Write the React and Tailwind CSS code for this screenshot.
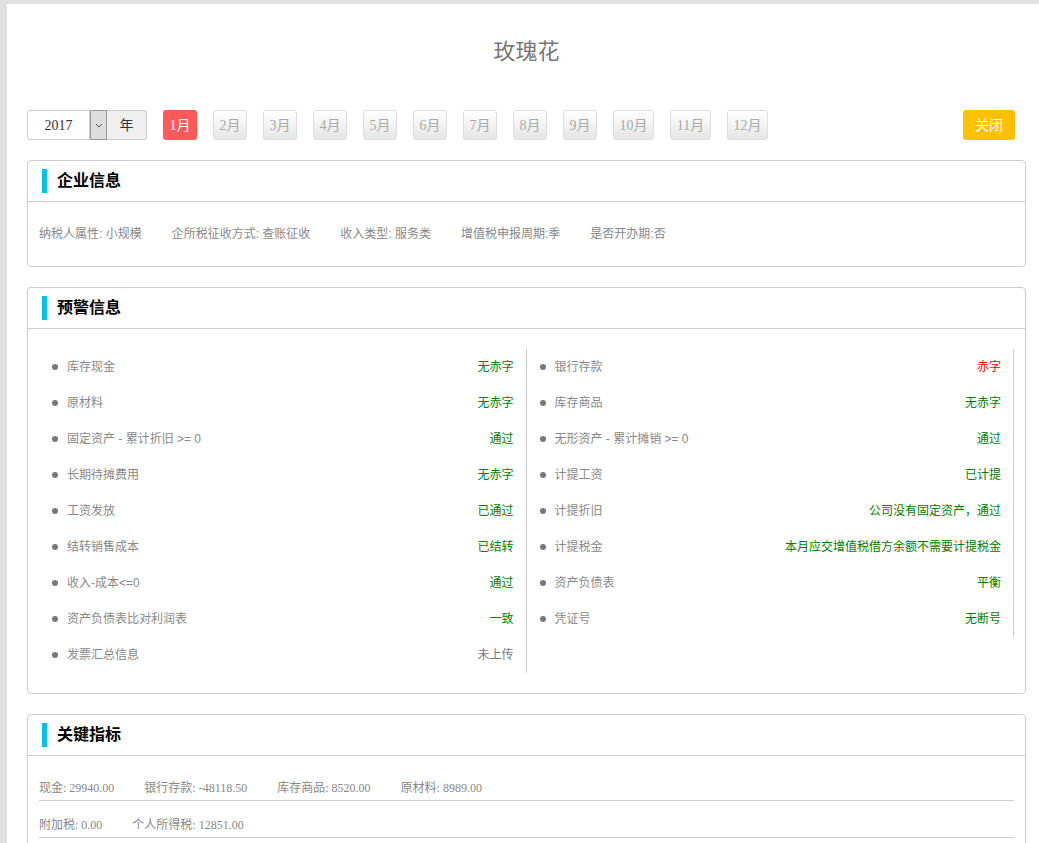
import React from 'react';

const sans = "font-['Liberation_Sans','Noto_Sans_CJK_SC',sans-serif]";
const serif = "font-['Liberation_Serif','Noto_Sans_CJK_SC',serif]";

const months = ['1月', '2月', '3月', '4月', '5月', '6月', '7月', '8月', '9月', '10月', '11月', '12月'];

const leftChecks = [
  { label: '库存现金', value: '无赤字', tone: 'green' },
  { label: '原材料', value: '无赤字', tone: 'green' },
  { label: '固定资产 - 累计折旧 >= 0', value: '通过', tone: 'green' },
  { label: '长期待摊费用', value: '无赤字', tone: 'green' },
  { label: '工资发放', value: '已通过', tone: 'green' },
  { label: '结转销售成本', value: '已结转', tone: 'green' },
  { label: '收入-成本<=0', value: '通过', tone: 'green' },
  { label: '资产负债表比对利润表', value: '一致', tone: 'green' },
  { label: '发票汇总信息', value: '未上传', tone: 'gray' },
];

const rightChecks = [
  { label: '银行存款', value: '赤字', tone: 'red' },
  { label: '库存商品', value: '无赤字', tone: 'green' },
  { label: '无形资产 - 累计摊销 >= 0', value: '通过', tone: 'green' },
  { label: '计提工资', value: '已计提', tone: 'green' },
  { label: '计提折旧', value: '公司没有固定资产，通过', tone: 'green' },
  { label: '计提税金', value: '本月应交增值税借方余额不需要计提税金', tone: 'green' },
  { label: '资产负债表', value: '平衡', tone: 'green' },
  { label: '凭证号', value: '无断号', tone: 'green' },
];

const toneClass = {
  green: 'text-[#008000]',
  red: 'text-[#ff0000]',
  gray: 'text-[#777]',
};

const PanelHeader = ({ title }) => (
  <div className="h-[41px] border-b border-[#ccc] flex items-center pl-[14px]">
    <span className="w-[5px] h-[24px] bg-[#00bfef]" />
    <h2 className="ml-[10px] text-[16px] font-bold text-black">{title}</h2>
  </div>
);

const CheckColumn = ({ items }) => (
  <ul className="border-r border-[#ccc]">
    {items.map((item) => (
      <li key={item.label} className="h-[36px] flex items-center pl-[13px] pr-[12px] text-[12px]">
        <span className="w-[6px] h-[6px] rounded-full bg-[#777]" />
        <span className="ml-[9px] text-[#888]">{item.label}</span>
        <span className={`ml-auto ${toneClass[item.tone]}`}>{item.value}</span>
      </li>
    ))}
  </ul>
);

const App = () => {
  return (
    <div className={`min-h-screen bg-[#e0e0e0] pl-[7px] pt-[4px] ${sans}`}>
      <div className="bg-white min-h-[839px] pl-[20px] pr-[13px] pb-[20px]">
        {/* Title */}
        <h1 className="pt-[36px] text-center text-[22px] leading-[24px] text-[#777]">玫瑰花</h1>

        {/* Year / month bar */}
        <div className="mt-[46px] h-[30px] flex items-center">
          <div className="flex h-[30px]">
            <div className={`w-[63px] border border-[#ccc] rounded-l-[3px] flex items-center justify-center text-[14px] text-[#333] ${serif}`}>
              2017
            </div>
            <div className="w-[17px] border border-[#999] bg-[#ddd] flex items-center justify-center">
              <svg width="8" height="5" viewBox="0 0 8 5" fill="none">
                <path d="M1 1l3 3 3-3" stroke="#555" strokeWidth="1" />
              </svg>
            </div>
            <div className="w-[40px] border border-l-0 border-[#ccc] rounded-r-[3px] bg-[#efefef] flex items-center justify-center text-[14px] text-[#333]">
              年
            </div>
          </div>

          <div className="ml-[16px] flex gap-[16px]">
            {months.map((m, i) =>
              i === 0 ? (
                <button
                  key={m}
                  className={`h-[30px] w-[34px] rounded-[3px] bg-[#ff5a5a] text-white text-[14px] ${serif}`}
                >
                  {m}
                </button>
              ) : (
                <button
                  key={m}
                  className={`h-[30px] ${m.length > 2 ? 'w-[41px]' : 'w-[34px]'} rounded-[3px] border border-[#ddd] bg-gradient-to-b from-white to-[#e6e6e6] text-[#aaa] text-[14px] ${serif}`}
                >
                  {m}
                </button>
              )
            )}
          </div>

          <button className="ml-auto mr-[11px] h-[30px] w-[52px] rounded-[3px] bg-[#ffc000] text-white text-[14px]">
            关闭
          </button>
        </div>

        {/* 企业信息 */}
        <section className="mt-[20px] border border-[#ccc] rounded-[4px]">
          <PanelHeader title="企业信息" />
          <div className="h-[64px] px-[11px] flex items-center gap-[30px] text-[12px] text-[#888]">
            <span>纳税人属性: 小规模</span>
            <span>企所税征收方式: 查账征收</span>
            <span>收入类型: 服务类</span>
            <span>增值税申报周期:季</span>
            <span>是否开办期:否</span>
          </div>
        </section>

        {/* 预警信息 */}
        <section className="mt-[20px] border border-[#ccc] rounded-[4px]">
          <PanelHeader title="预警信息" />
          <div className="px-[11px] pt-[20px] pb-[20px] grid grid-cols-2 items-start">
            <CheckColumn items={leftChecks} />
            <CheckColumn items={rightChecks} />
          </div>
        </section>

        {/* 关键指标 */}
        <section className="mt-[20px] border border-[#ccc] rounded-[4px]">
          <PanelHeader title="关键指标" />
          <div className={`px-[11px] pt-[8px] pb-[40px] text-[12px] text-[#888] ${serif}`}>
            <div className="flex gap-[30px] pt-[15px] pb-[3px] leading-[18px] border-b border-[#ccc]">
              <span>现金: 29940.00</span>
              <span>银行存款: -48118.50</span>
              <span>库存商品: 8520.00</span>
              <span>原材料: 8989.00</span>
            </div>
            <div className="flex gap-[30px] pt-[15px] pb-[3px] leading-[18px] border-b border-[#ccc]">
              <span>附加税: 0.00</span>
              <span>个人所得税: 12851.00</span>
            </div>
          </div>
        </section>
      </div>
    </div>
  );
};

export default App;
